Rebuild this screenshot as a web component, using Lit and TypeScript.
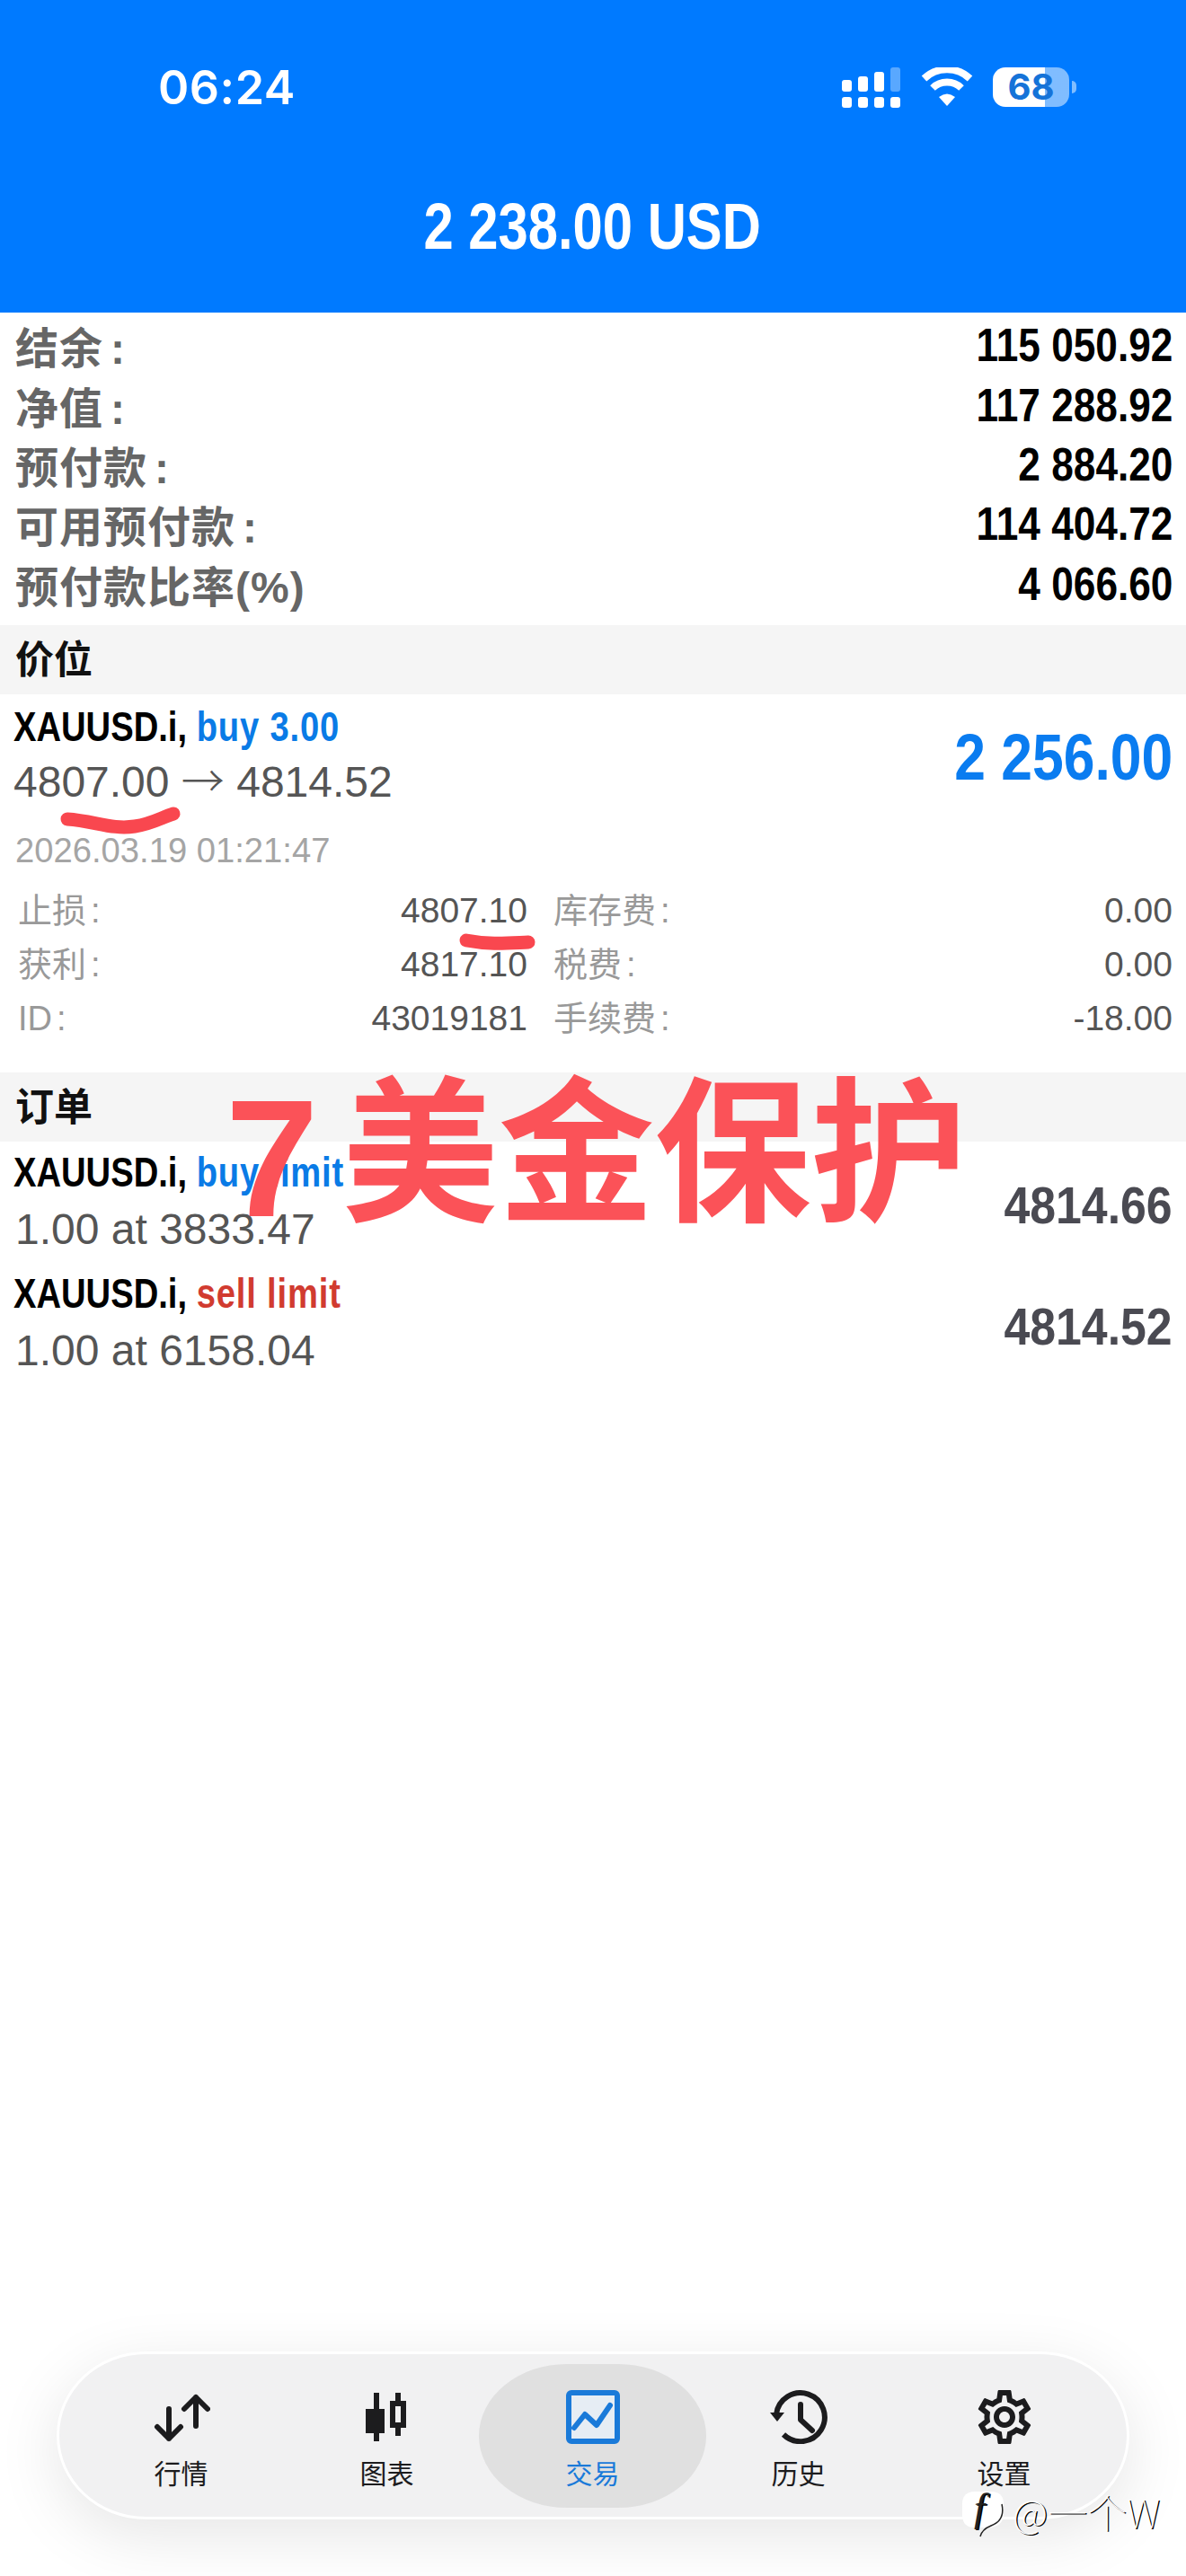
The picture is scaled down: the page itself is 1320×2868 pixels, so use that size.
import { LitElement, html, css, svg } from "lit";
import { customElement } from "lit/decorators.js";
import { classMap } from "lit/directives/class-map.js";

const ACCOUNT = [
  ["结余", "115 050.92", true],
  ["净值", "117 288.92", true],
  ["预付款", "2 884.20", true],
  ["可用预付款", "114 404.72", true],
  ["预付款比率(%)", "4 066.60", false],
];

const DETAILS = [
  ["止损", "4807.10", "库存费", "0.00"],
  ["获利", "4817.10", "税费", "0.00"],
  ["ID", "43019181", "手续费", "-18.00"],
];

const ORDERS = [
  { side: "buy limit", cls: "buy", line: "1.00 at 3833.47", price: "4814.66" },
  { side: "sell limit", cls: "sell", line: "1.00 at 6158.04", price: "4814.52" },
];

const GEAR =
  "M19.43 12.98c.04-.32.07-.64.07-.98 0-.34-.03-.66-.07-.98l2.11-1.65c.19-.15.24-.42.12-.64l-2-3.46c-.09-.16-.26-.25-.44-.25-.06 0-.12.01-.17.03l-2.49 1c-.52-.4-1.08-.73-1.69-.98l-.38-2.65C14.46 2.18 14.25 2 14 2h-4c-.25 0-.46.18-.49.42l-.38 2.65c-.61.25-1.17.59-1.69.98l-2.49-1c-.06-.02-.12-.03-.18-.03-.17 0-.34.09-.43.25l-2 3.46c-.13.22-.07.49.12.64l2.11 1.65c-.04.32-.07.65-.07.98 0 .33.03.66.07.98l-2.11 1.65c-.19.15-.24.42-.12.64l2 3.46c.09.16.26.25.44.25.06 0 .12-.01.17-.03l2.49-1c.52.4 1.08.73 1.69.98l.38 2.65c.03.24.24.42.49.42h4c.25 0 .46-.18.49-.42l.38-2.65c.61-.25 1.17-.59 1.69-.98l2.49 1c.06.02.12.03.18.03.17 0 .34-.09.43-.25l2-3.46c.12-.22.07-.49-.12-.64l-2.11-1.65zm-1.98-1.71c.04.31.05.52.05.73 0 .21-.02.43-.05.73l-.14 1.13.89.7 1.08.84-.7 1.21-1.27-.51-1.04-.42-.9.68c-.43.32-.84.56-1.25.73l-1.06.43-.16 1.13-.2 1.35h-1.4l-.19-1.35-.16-1.13-1.06-.43c-.43-.18-.83-.41-1.23-.71l-.91-.7-1.06.43-1.27.51-.7-1.21 1.08-.84.89-.7-.14-1.13c-.03-.31-.05-.54-.05-.74s.02-.43.05-.73l.14-1.13-.89-.7-1.08-.84.7-1.21 1.27.51 1.04.42.9-.68c.43-.32.84-.56 1.25-.73l1.06-.43.16-1.13.2-1.35h1.39l.19 1.35.16 1.13 1.06.43c.43.18.83.41 1.23.71l.91.7 1.06-.43 1.27-.51.7 1.21-1.07.85-.89.7.14 1.13zM12 8c-2.21 0-4 1.79-4 4s1.79 4 4 4 4-1.79 4-4-1.79-4-4-4zm0 6c-1.1 0-2-.9-2-2s.9-2 2-2 2 .9 2 2-.9 2-2 2z";

// tab icons, all drawn in a 64x60 box
const TABS = [
  {
    label: "行情",
    icon: svg`<path d="M48 8v32M35 21 48 8l13 13M18 21v33M5 41l13 13 13-13" fill="none" stroke="currentColor" stroke-width="6" stroke-linecap="round" stroke-linejoin="round"/>`,
  },
  {
    label: "图表",
    icon: svg`<path d="M17 3h6v18h6v27h-6v9h-6v-9H8V21h9z M41 3h6v9h6v30h-6v9h-6v-9h-6V12h6z M41 18v18h6V18z" fill="currentColor" fill-rule="evenodd"/>`,
  },
  {
    label: "交易",
    active: true,
    icon: svg`<rect x="5" y="3" width="54" height="54" rx="3" fill="#e6edf4" stroke="currentColor" stroke-width="6"/>
      <path d="M11 42 23 27l13 12 15-22" fill="none" stroke="currentColor" stroke-width="6" stroke-linecap="round" stroke-linejoin="round"/>`,
  },
  {
    label: "历史",
    icon: svg`<path d="M7 27A27 27 0 1 1 15 49.5" fill="none" stroke="currentColor" stroke-width="6"/>
      <path d="M0 25h16l-8 10z" fill="currentColor"/>
      <path d="M34 16v17l13 12" fill="none" stroke="currentColor" stroke-width="6" stroke-linecap="round" stroke-linejoin="round"/>`,
  },
  {
    label: "设置",
    icon: svg`<g transform="translate(-4 -6) scale(3)"><path d="${GEAR}" fill="currentColor"/></g>`,
  },
];

@customElement("app-root")
export class AppRoot extends LitElement {
  static styles = css`
    :host {
      display: block;
      position: relative;
      width: 1320px;
      height: 2868px;
      overflow: hidden;
      background: #fff;
      font-family: "Liberation Sans", "Noto Sans CJK SC", sans-serif;
    }

    .page {
      display: flex;
      flex-direction: column;
      height: 100%;
    }

    /* the app's bold type is narrower than Liberation, squeeze it */
    .narrow {
      display: inline-block;
      white-space: nowrap;
    }

    /* ── Blue header ────────────────────────────────────────────────────── */
    .header {
      height: 348px;
      flex: none;
      background: #007aff;
      color: #fff;
      display: flex;
      flex-direction: column;
    }
    .status {
      height: 150px;
      padding: 44px 122px 0 176px;
      box-sizing: border-box;
      display: flex;
      align-items: center;
      justify-content: space-between;
    }
    .time {
      font-family: Inter, sans-serif;
      font-size: 52px;
      font-weight: 600;
      letter-spacing: 0.5px;
    }
    .status-icons {
      display: flex;
      align-items: center;
      gap: 22px;
    }
    .battery-wrap {
      display: flex;
      align-items: center;
      gap: 3px;
    }
    .battery {
      width: 85px;
      height: 44px;
      border-radius: 14px;
      background: linear-gradient(90deg, #fff 68%, rgba(255, 255, 255, 0.5) 68%);
      color: #1573d8;
      font-family: Inter, sans-serif;
      font-size: 40px;
      font-weight: 700;
      line-height: 44px;
      text-align: center;
    }
    .nub {
      width: 5px;
      height: 14px;
      border-radius: 0 5px 5px 0;
      background: rgba(255, 255, 255, 0.5);
    }
    .balance {
      margin-top: 50px;
      padding-right: 2px;
      text-align: center;
      font-size: 72px;
      font-weight: 700;
      line-height: 104px;
    }
    .balance .narrow {
      transform: scaleX(0.83);
    }

    /* ── Account summary ────────────────────────────────────────────────── */
    .account {
      padding: 3px 15px 13px 17px;
    }
    .acc-row {
      height: 66.4px;
      display: flex;
      align-items: center;
      justify-content: space-between;
    }
    .acc-label {
      font-size: 48px;
      font-weight: 700;
      line-height: 60px;
      color: #666;
      letter-spacing: 1px;
      transform: translateY(5px);
    }
    .colon {
      margin-left: 8px;
    }
    .acc-value {
      font-size: 52px;
      font-weight: 700;
      line-height: 60px;
      color: #000;
      transform: scaleX(0.85);
      transform-origin: right center;
    }

    .section {
      height: 77px;
      flex: none;
      box-sizing: border-box;
      padding-left: 17px;
      background: #f5f5f5;
      font-size: 43px;
      font-weight: 700;
      color: #111;
      line-height: 78px;
    }

    /* ── Trade rows ─────────────────────────────────────────────────────── */
    .symbol {
      font-size: 46px;
      font-weight: 700;
      color: #000;
      transform: scaleX(0.83);
      transform-origin: left center;
    }
    .side {
      letter-spacing: 1px;
    }
    .buy { color: #0a7be6; }
    .sell { color: #d13b30; }
    .sub {
      font-size: 48px;
      color: #555;
      white-space: nowrap;
    }
    .arrow {
      font-family: "Noto Sans CJK SC", sans-serif;
      font-weight: 300;
      line-height: 0;
    }
    .pos-head {
      display: flex;
      justify-content: space-between;
      align-items: center;
      padding: 0 15px;
    }
    .pos-line1 { display: block; height: 72px; line-height: 72px; }
    .pos-line2 { height: 52px; line-height: 52px; }
    .profit {
      margin-top: 16px;
      font-size: 72px;
      font-weight: 700;
      color: #0a7cf0;
      transform: scaleX(0.867);
      transform-origin: right center;
    }
    .date {
      margin-top: 25px;
      padding-left: 17px;
      font-size: 38.2px;
      line-height: 50px;
      color: #a5a5a5;
    }
    .details {
      margin: 12px 15px 30px 20px;
      display: grid;
      grid-template-columns: 567px 1fr;
      grid-auto-rows: 60px;
      column-gap: 29px;
      align-items: center;
    }
    .pair {
      display: flex;
      justify-content: space-between;
      align-items: center;
      font-size: 39px;
      line-height: 50px;
      color: #555;
    }
    .pair span:first-child {
      font-size: 38px;
      color: #999;
    }
    .pair .colon {
      margin-left: 5px;
    }

    .order {
      height: 135px;
      padding: 0 15px;
      display: flex;
      justify-content: space-between;
      align-items: center;
    }
    .order-line1 { display: block; height: 68px; line-height: 68px; }
    .order-line2 { height: 60px; line-height: 60px; padding-left: 2px; }
    .order-text { padding-bottom: 7px; }
    .order-price {
      margin-top: 6px;
      font-size: 58px;
      font-weight: 700;
      color: #4a4a52;
      transform: scaleX(0.893);
      transform-origin: right center;
    }

    /* ── Tab bar ────────────────────────────────────────────────────────── */
    .tabbar {
      margin: auto 63px 63px 63px;
      height: 187px;
      flex: none;
      box-sizing: border-box;
      padding: 14px 0 0 21px;
      border: 3px solid #fff;
      border-radius: 100px / 94px;
      background: #f1f1f2;
      box-shadow: 0 18px 70px rgba(0, 0, 0, 0.1);
      display: grid;
      grid-template-columns: repeat(5, 229px);
      align-items: center;
    }
    .tab {
      position: relative;
      display: flex;
      flex-direction: column;
      align-items: center;
      gap: 13px;
      color: #1c1c1e;
      font-size: 30px;
    }
    .tab svg {
      position: relative;
      display: block;
      width: 64px;
      height: 60px;
    }
    .tab span {
      position: relative;
      line-height: 42px;
    }
    .tab.active {
      color: #1a7ad9;
    }
    .tab.active::before {
      content: "";
      position: absolute;
      left: -12px;
      right: -12px;
      top: -29px;
      height: 160px;
      border-radius: 98px / 80px;
      background: #e0e0e0;
    }

    /* ── Overlays painted on the screenshot ─────────────────────────────── */
    .marks {
      position: absolute;
      left: 0;
      top: 880px;
      width: 1320px;
      height: 200px;
      pointer-events: none;
    }
    .stamp {
      position: absolute;
      left: 251px;
      top: 1180px;
      display: flex;
      align-items: baseline;
      gap: 26px;
      color: #fb5258;
      font-size: 174px;
      font-weight: 700;
      line-height: 180px;
      white-space: nowrap;
    }
    .stamp b {
      position: relative;
      top: 8px;
      font-size: 186px;
    }
    .stamp span {
      font-family: "Noto Sans CJK SC", sans-serif;
    }
    .wm {
      position: absolute;
      left: 1069px;
      top: 2772px;
      display: flex;
      align-items: flex-start;
      gap: 8px;
      font-family: "Noto Sans CJK SC", sans-serif;
      font-size: 44px;
      font-weight: 100;
      line-height: 44px;
      color: #fff;
      text-shadow: 1.5px 1px 0 #000;
      white-space: nowrap;
    }
    .wm-text {
      margin-top: 2px;
    }
    .wm-logo {
      display: block;
      overflow: visible;
    }
    .wm-logo text {
      font-family: "Liberation Serif", serif;
      font-style: italic;
      font-size: 44px;
    }
  `;

  private statusIcons() {
    return html`<div class="status-icons">
      <svg width="66" height="46" viewBox="0 0 66 46" fill="#fff">
        <rect x="0" y="15" width="11" height="13" rx="3"/>
        <rect x="18" y="11" width="11" height="17" rx="3"/>
        <rect x="36" y="6" width="11" height="22" rx="3"/>
        <rect x="54" y="1" width="11" height="27" rx="3" opacity="0.35"/>
        <rect x="0" y="34" width="11" height="12" rx="3"/>
        <rect x="18" y="34" width="11" height="12" rx="3"/>
        <rect x="36" y="34" width="11" height="12" rx="3"/>
        <rect x="54" y="34" width="11" height="12" rx="3"/>
      </svg>
      <svg width="58" height="44" viewBox="0 0 58 44">
        <path d="M3.5 12.5A37 37 0 0 1 54.5 12.5M13 23A23 23 0 0 1 45 23" fill="none" stroke="#fff" stroke-width="8"/>
        <path d="M20 33Q29 26 38 33L29 43Z" fill="#fff"/>
      </svg>
      <div class="battery-wrap">
        <div class="battery">68</div>
        <div class="nub"></div>
      </div>
    </div>`;
  }

  render() {
    return html`
      <div class="page">
        <div class="header">
          <div class="status">
            <div class="time">06:24</div>
            ${this.statusIcons()}
          </div>
          <div class="balance"><span class="narrow">2 238.00 USD</span></div>
        </div>

        <div class="account">
          ${ACCOUNT.map(
            ([k, v, colon]) => html`<div class="acc-row">
              <span class="acc-label">${k}${colon ? html`<span class="colon">:</span>` : ""}</span>
              <span class="narrow acc-value">${v}</span>
            </div>`
          )}
        </div>

        <div class="section">价位</div>
        <div class="pos-head">
          <div>
            <div class="narrow symbol pos-line1">XAUUSD.i, <span class="side buy">buy 3.00</span></div>
            <div class="sub pos-line2">4807.00 <span class="arrow">→</span> 4814.52</div>
          </div>
          <div class="narrow profit">2 256.00</div>
        </div>
        <div class="date">2026.03.19 01:21:47</div>
        <div class="details">
          ${DETAILS.map(
            ([a, b, c, d]) => html`
              <div class="pair"><span>${a}<span class="colon">:</span></span><span>${b}</span></div>
              <div class="pair"><span>${c}<span class="colon">:</span></span><span>${d}</span></div>
            `
          )}
        </div>

        <div class="section">订单</div>
        ${ORDERS.map(
          (o) => html`<div class="order">
            <div class="order-text">
              <div class="narrow symbol order-line1">XAUUSD.i, <span class="side ${o.cls}">${o.side}</span></div>
              <div class="sub order-line2">${o.line}</div>
            </div>
            <div class="narrow order-price">${o.price}</div>
          </div>`
        )}

        <div class="tabbar">
          ${TABS.map(
            (t) => html`<div class=${classMap({ tab: true, active: !!t.active })}>
              <svg viewBox="0 0 64 60">${t.icon}</svg>
              <span>${t.label}</span>
            </div>`
          )}
        </div>
      </div>

      <svg class="marks" viewBox="0 880 1320 200">
        <path d="M75 912C105 914 125 924 150 920 170 917 180 910 193 906" fill="none" stroke="#f9474f" stroke-width="15" stroke-linecap="round"/>
        <path d="M519 1047C545 1052 565 1050 588 1049" fill="none" stroke="#f9474f" stroke-width="15" stroke-linecap="round"/>
      </svg>
      <div class="stamp"><b>7</b><span>美金保护</span></div>
      <div class="wm">
        <svg class="wm-logo" width="50" height="54" viewBox="0 0 50 54">
          <path d="M16 2H34Q48 2 48 16V26Q48 42 30 42H16Q2 42 2 28V16Q2 2 16 2Z" fill="#fff"/>
          <path d="M46 16Q50 34 34 40Q24 44 22 52" fill="none" stroke="#222" stroke-width="1.5"/>
          <text x="15" y="35" fill="#222">f</text>
        </svg>
        <div class="wm-text">@一个W</div>
      </div>
    `;
  }
}
